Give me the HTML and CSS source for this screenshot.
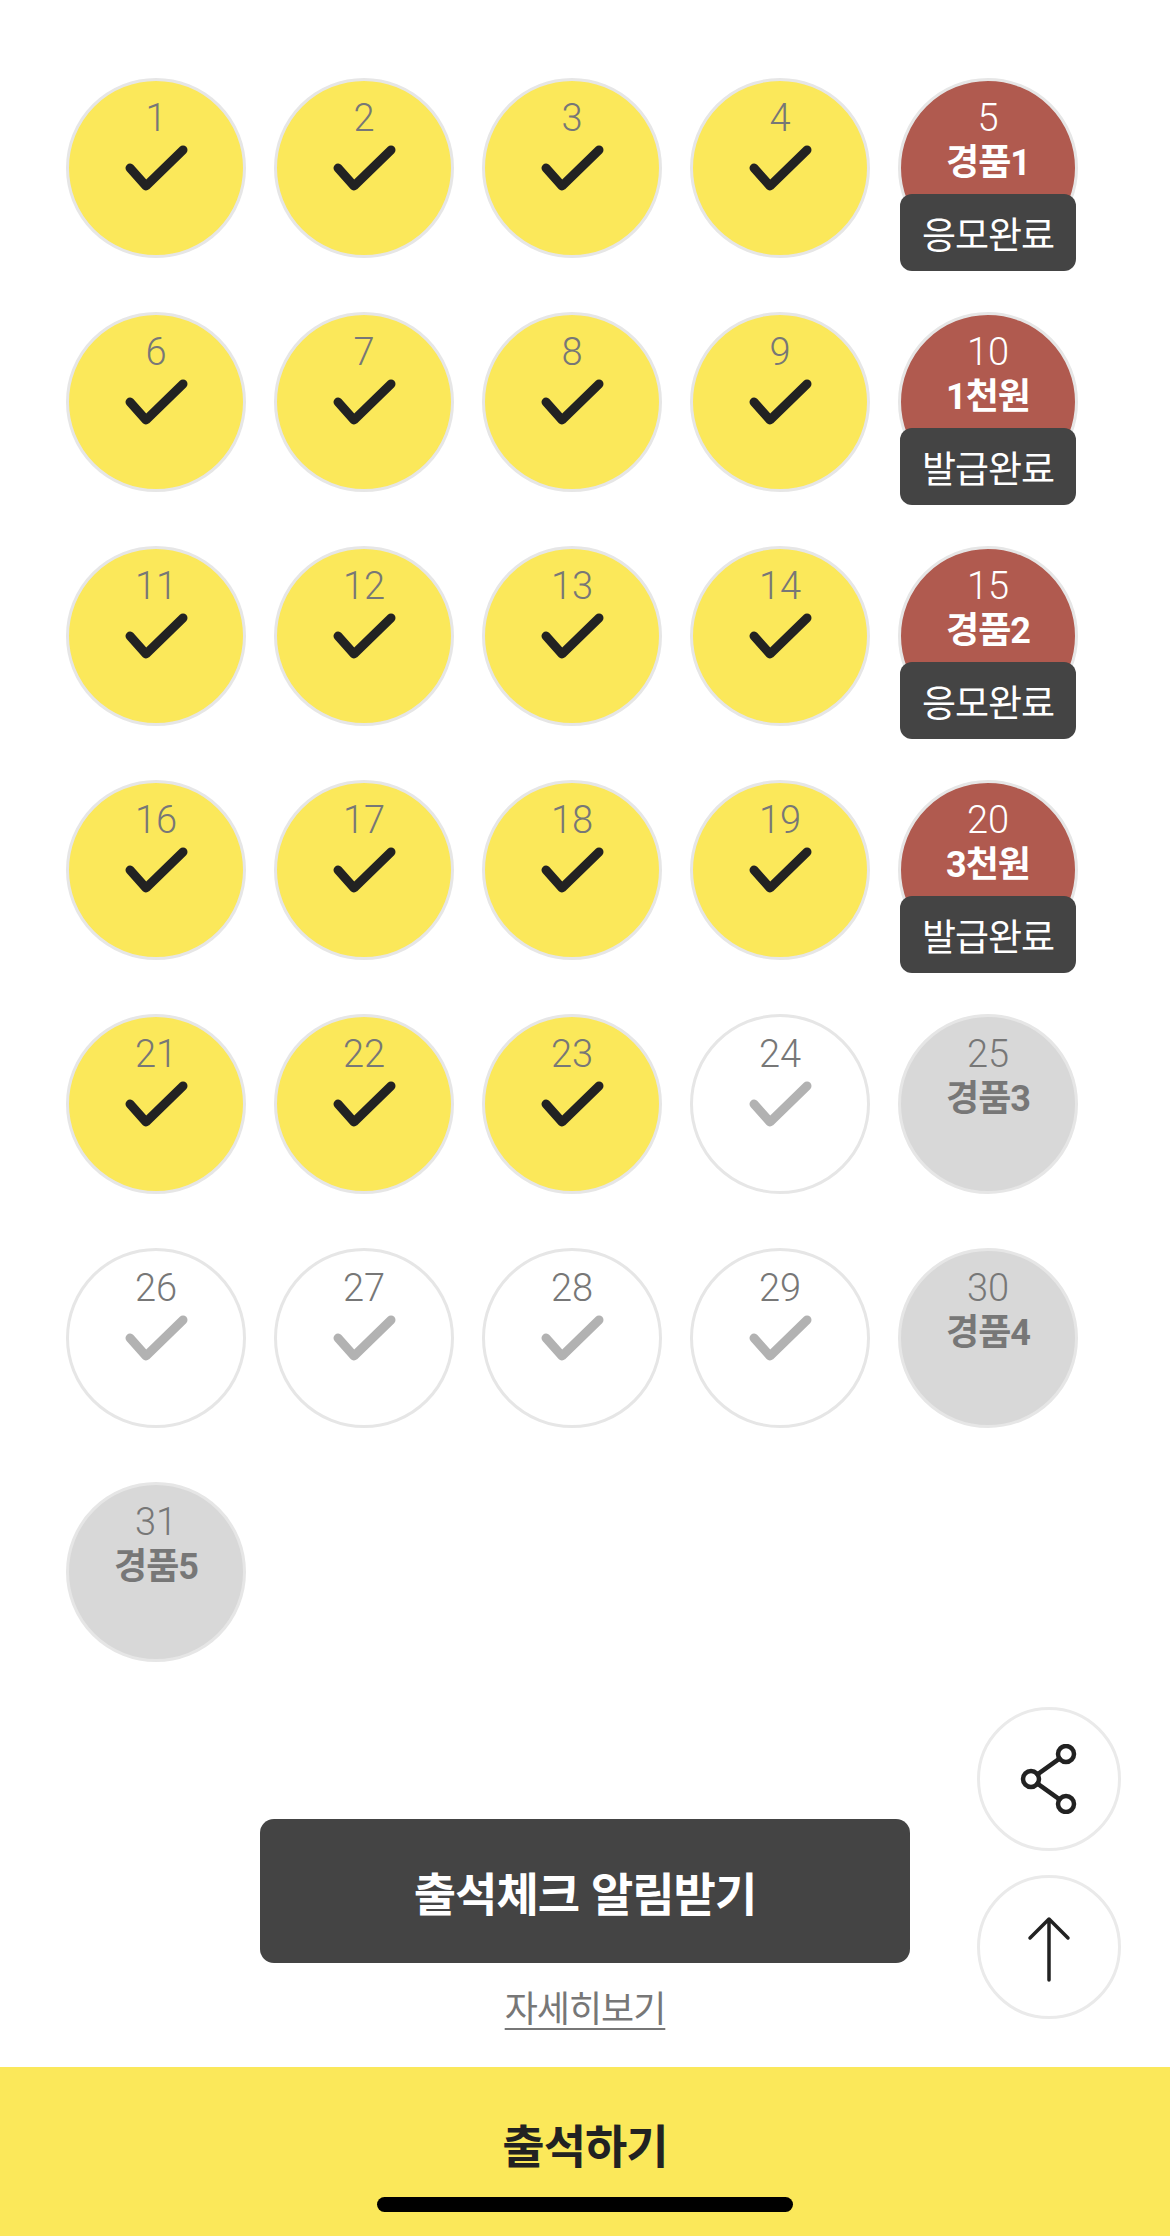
FILE: index.html
```html
<!DOCTYPE html>
<html lang="ko">
<head>
<meta charset="utf-8">
<title>출석체크</title>
<link rel="stylesheet" href="styles.css">
</head>
<body>
<main class="page">
  <section class="grid">
    <div class="day done"><span class="num">1</span><svg class="chk" viewBox="0 0 63 46"><path d="M5 23 L21 41 L58 5"/></svg></div>
    <div class="day done"><span class="num">2</span><svg class="chk" viewBox="0 0 63 46"><path d="M5 23 L21 41 L58 5"/></svg></div>
    <div class="day done"><span class="num">3</span><svg class="chk" viewBox="0 0 63 46"><path d="M5 23 L21 41 L58 5"/></svg></div>
    <div class="day done"><span class="num">4</span><svg class="chk" viewBox="0 0 63 46"><path d="M5 23 L21 41 L58 5"/></svg></div>
    <div class="day prize"><span class="num">5</span><span class="gift">경품1</span><span class="badge">응모완료</span></div>

    <div class="day done"><span class="num">6</span><svg class="chk" viewBox="0 0 63 46"><path d="M5 23 L21 41 L58 5"/></svg></div>
    <div class="day done"><span class="num">7</span><svg class="chk" viewBox="0 0 63 46"><path d="M5 23 L21 41 L58 5"/></svg></div>
    <div class="day done"><span class="num">8</span><svg class="chk" viewBox="0 0 63 46"><path d="M5 23 L21 41 L58 5"/></svg></div>
    <div class="day done"><span class="num">9</span><svg class="chk" viewBox="0 0 63 46"><path d="M5 23 L21 41 L58 5"/></svg></div>
    <div class="day prize"><span class="num">10</span><span class="gift">1천원</span><span class="badge">발급완료</span></div>

    <div class="day done"><span class="num">11</span><svg class="chk" viewBox="0 0 63 46"><path d="M5 23 L21 41 L58 5"/></svg></div>
    <div class="day done"><span class="num">12</span><svg class="chk" viewBox="0 0 63 46"><path d="M5 23 L21 41 L58 5"/></svg></div>
    <div class="day done"><span class="num">13</span><svg class="chk" viewBox="0 0 63 46"><path d="M5 23 L21 41 L58 5"/></svg></div>
    <div class="day done"><span class="num">14</span><svg class="chk" viewBox="0 0 63 46"><path d="M5 23 L21 41 L58 5"/></svg></div>
    <div class="day prize"><span class="num">15</span><span class="gift">경품2</span><span class="badge">응모완료</span></div>

    <div class="day done"><span class="num">16</span><svg class="chk" viewBox="0 0 63 46"><path d="M5 23 L21 41 L58 5"/></svg></div>
    <div class="day done"><span class="num">17</span><svg class="chk" viewBox="0 0 63 46"><path d="M5 23 L21 41 L58 5"/></svg></div>
    <div class="day done"><span class="num">18</span><svg class="chk" viewBox="0 0 63 46"><path d="M5 23 L21 41 L58 5"/></svg></div>
    <div class="day done"><span class="num">19</span><svg class="chk" viewBox="0 0 63 46"><path d="M5 23 L21 41 L58 5"/></svg></div>
    <div class="day prize"><span class="num">20</span><span class="gift">3천원</span><span class="badge">발급완료</span></div>

    <div class="day done"><span class="num">21</span><svg class="chk" viewBox="0 0 63 46"><path d="M5 23 L21 41 L58 5"/></svg></div>
    <div class="day done"><span class="num">22</span><svg class="chk" viewBox="0 0 63 46"><path d="M5 23 L21 41 L58 5"/></svg></div>
    <div class="day done"><span class="num">23</span><svg class="chk" viewBox="0 0 63 46"><path d="M5 23 L21 41 L58 5"/></svg></div>
    <div class="day todo"><span class="num">24</span><svg class="chk" viewBox="0 0 63 46"><path d="M5 23 L21 41 L58 5"/></svg></div>
    <div class="day locked"><span class="num">25</span><span class="gift">경품3</span></div>

    <div class="day todo"><span class="num">26</span><svg class="chk" viewBox="0 0 63 46"><path d="M5 23 L21 41 L58 5"/></svg></div>
    <div class="day todo"><span class="num">27</span><svg class="chk" viewBox="0 0 63 46"><path d="M5 23 L21 41 L58 5"/></svg></div>
    <div class="day todo"><span class="num">28</span><svg class="chk" viewBox="0 0 63 46"><path d="M5 23 L21 41 L58 5"/></svg></div>
    <div class="day todo"><span class="num">29</span><svg class="chk" viewBox="0 0 63 46"><path d="M5 23 L21 41 L58 5"/></svg></div>
    <div class="day locked"><span class="num">30</span><span class="gift">경품4</span></div>

    <div class="day locked"><span class="num">31</span><span class="gift">경품5</span></div>
  </section>

  <section class="cta">
    <button class="notify" type="button">출석체크 알림받기</button>
    <a class="more" href="#">자세히보기</a>
  </section>

  <footer class="bar">
    <span class="bar-text">출석하기</span>
    <span class="home-indicator"></span>
  </footer>
</main>

<div class="fab">
  <button class="fab-btn" type="button" aria-label="공유">
    <svg class="ico-share" viewBox="0 0 60 70">
      <circle cx="12" cy="35" r="8"/>
      <circle cx="47" cy="10" r="8"/>
      <circle cx="47" cy="60" r="8"/>
      <path d="M18.5 30.4 L40.5 14.6 M18.5 39.6 L40.5 55.4"/>
    </svg>
  </button>
  <button class="fab-btn" type="button" aria-label="맨 위로">
    <svg class="ico-up" viewBox="0 0 44 66">
      <path d="M22 3 V64 M3 22 L22 3 L41 22"/>
    </svg>
  </button>
</div>
</body>
</html>
```

FILE: styles.css
```css
* { box-sizing: border-box; }

html, body {
  margin: 0;
  padding: 0;
  background: #ffffff;
}

body {
  width: 1170px;
  min-height: 2236px;
  font-family: "Noto Sans CJK KR", "Noto Sans", sans-serif;
  color: #222;
}

.page {
  display: flex;
  flex-direction: column;
}

.grid {
  display: grid;
  grid-template-columns: repeat(5, 180px);
  column-gap: 28px;
  row-gap: 54px;
  padding: 78px 0 0 66px;
}

.day {
  position: relative;
  width: 180px;
  height: 180px;
  border-radius: 50%;
  border: 3px solid #e6e6e6;
  display: flex;
  flex-direction: column;
  align-items: center;
  padding-top: 17px;
}

.day.done { background: #fbe85a; }
.day.todo { background: #ffffff; }
.day.prize { background: #b05a4f; }
.day.locked { background: #d8d8d8; }

.num {
  display: block;
  height: 40px;
  font-family: Roboto, "Noto Sans CJK KR", sans-serif;
  font-size: 38px;
  line-height: 40px;
  font-weight: 300;
  color: #777777;
}

.prize .num { color: #ffffff; }

.chk {
  width: 63px;
  height: 46px;
  margin-top: 7px;
  fill: none;
  stroke: #222222;
  stroke-width: 9;
  stroke-linecap: round;
  stroke-linejoin: round;
}

.todo .chk { stroke: #b2b2b2; }

.gift {
  display: block;
  height: 40px;
  margin-top: 5px;
  font-family: Roboto, "Noto Sans CJK KR", sans-serif;
  font-size: 36px;
  line-height: 40px;
  font-weight: 700;
  color: #777777;
  letter-spacing: -1px;
}

.prize .gift { color: #ffffff; }

.badge {
  position: absolute;
  left: -1px;
  right: -1px;
  top: 113px;
  height: 77px;
  border-radius: 12px;
  background: #444444;
  color: #ffffff;
  font-size: 37px;
  font-weight: 400;
  display: flex;
  align-items: center;
  justify-content: center;
  letter-spacing: -1px;
}

.cta {
  display: flex;
  flex-direction: column;
  align-items: center;
  margin-top: 157px;
}

.notify {
  width: 650px;
  height: 144px;
  border: none;
  border-radius: 14px;
  background: #444444;
  color: #ffffff;
  font-family: "Noto Sans CJK KR", "Noto Sans", sans-serif;
  font-size: 46px;
  font-weight: 700;
  letter-spacing: -1px;
  padding: 0;
}

.more {
  margin-top: 23px;
  font-size: 36px;
  line-height: 40px;
  color: #777777;
  text-decoration: underline;
  text-underline-offset: 6px;
  text-decoration-thickness: 2px;
  letter-spacing: -1px;
}

.bar {
  margin-top: 41px;
  height: 169px;
  background: #fbe85a;
  display: flex;
  flex-direction: column;
  align-items: center;
  padding-top: 51px;
}

.bar-text {
  font-size: 46px;
  line-height: 50px;
  font-weight: 700;
  color: #222222;
  letter-spacing: -1px;
}

.home-indicator {
  margin-top: 29px;
  width: 416px;
  height: 15px;
  border-radius: 8px;
  background: #000000;
}

.fab {
  position: fixed;
  right: 49px;
  bottom: 217px;
  display: flex;
  flex-direction: column;
  gap: 24px;
}

.fab-btn {
  width: 144px;
  height: 144px;
  border-radius: 50%;
  border: 3px solid #eaeaea;
  background: #ffffff;
  display: flex;
  align-items: center;
  justify-content: center;
  padding: 0;
}

.ico-share {
  width: 60px;
  height: 70px;
  fill: none;
  stroke: #222222;
  stroke-width: 4.5;
  stroke-linecap: round;
}

.ico-up {
  width: 44px;
  height: 66px;
  margin-top: 4px;
  fill: none;
  stroke: #222222;
  stroke-width: 3.5;
  stroke-linecap: round;
  stroke-linejoin: round;
}
```
